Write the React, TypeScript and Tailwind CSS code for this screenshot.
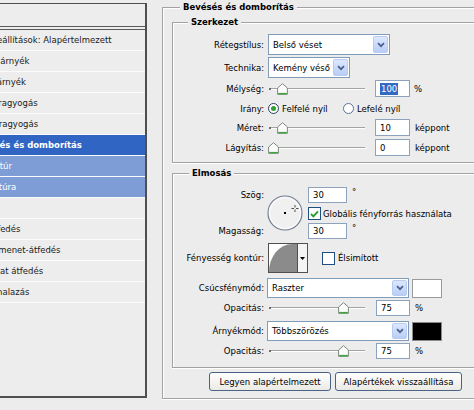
import React from "react";

type Row = { t: string; ml: string; kind?: "sel" | "sub" };

const rows: Row[] = [
  { t: "Keverési beállítások: Alapértelmezett", ml: "-ml-[47px]" },
  { t: "Vetett árnyék", ml: "-ml-[28px]" },
  { t: "Belső árnyék", ml: "-ml-[29px]" },
  { t: "Külső ragyogás", ml: "-ml-[27px]" },
  { t: "Belső ragyogás", ml: "-ml-[27px]" },
  { t: "Bevésés és domborítás", ml: "-ml-[29px]", kind: "sel" },
  { t: "Kontúr", ml: "-ml-[16px]", kind: "sub" },
  { t: "Textúra", ml: "-ml-[15px]", kind: "sub" },
  { t: "Szatén", ml: "-ml-[31px]" },
  { t: "Színátfedés", ml: "-ml-[29px]" },
  { t: "Színátmenet-átfedés", ml: "-ml-[28px]" },
  { t: "Mintázat átfedés", ml: "-ml-[28px]" },
  { t: "Körvonalazás", ml: "-ml-[27px]" },
];

function StyleList() {
  return (
    <div className="mt-[3px] w-[147px] h-[395px] shrink-0 overflow-hidden border-t border-r-2 border-b-2 border-[#4f4f4f] bg-[#ededed] flex flex-col">
      <div className="h-[26px] shrink-0 border-b-4 border-double border-[#5a5a5a]" />
      {rows.map((r) => {
        const tone =
          r.kind === "sel"
            ? "bg-[#3165c4] text-white font-bold"
            : r.kind === "sub"
            ? "bg-[#7e9dd6] text-white"
            : "text-[#1a1a1a]";
        return (
          <div
            key={r.t}
            className={`h-[21px] shrink-0 border-b border-[#fbfbfb] flex items-center overflow-hidden ${tone}`}
          >
            <span className={`shrink-0 whitespace-nowrap leading-[12px] ${r.ml}`}>{r.t}</span>
          </div>
        );
      })}
    </div>
  );
}

function Label({ children }: { children: React.ReactNode }) {
  return <div className="w-[91px] shrink-0 text-right whitespace-nowrap leading-[12px]">{children}</div>;
}

function Chevron() {
  return (
    <svg width="8" height="6" viewBox="0 0 8 6">
      <path d="M1 1.2 L4 4.2 L7 1.2" fill="none" stroke="#4a5f8c" strokeWidth="1.7" />
    </svg>
  );
}

function Select({ w, h, value }: { w: string; h: string; value: string }) {
  return (
    <div className={`${w} ${h} shrink-0 bg-white border border-[#7f9db9] flex items-center`}>
      <span className="flex-1 pl-[4px] whitespace-nowrap leading-[12px]">{value}</span>
      <div className="w-[17px] h-full p-px">
        <div className="h-full rounded-[2px] border border-[#b8cbf3] bg-gradient-to-b from-[#dde8fe] to-[#b9cdf7] flex items-center justify-center">
          <Chevron />
        </div>
      </div>
    </div>
  );
}

function Field({ w, h, children }: { w: string; h: string; children: React.ReactNode }) {
  return (
    <div className={`${w} ${h} shrink-0 bg-white border border-[#8da3bd] flex items-center pl-[4px] leading-[12px]`}>
      {children}
    </div>
  );
}

function Thumb() {
  return (
    <svg width="11" height="12" viewBox="0 0 11 12">
      <path d="M5.5 0.7 L10.4 5 L10.4 11.3 L0.6 11.3 L0.6 5 Z" fill="#fbfcfb" stroke="#7d8a7d" strokeWidth="1" />
      <path d="M1.2 10.6 H9.8" stroke="#3da43d" strokeWidth="1.4" />
    </svg>
  );
}

function Slider({ pos }: { pos: string }) {
  return (
    <div className="relative w-[100px] h-full shrink-0">
      <div className="absolute left-[2px] right-[3px] top-1/2 -mt-px h-0 border-t border-b border-t-[#a3a3a3] border-b-white" />
      <div className="absolute left-[1px] top-1/2 -mt-px w-[2px] h-[2px] bg-[#6e6e6e]" />
      <div className={`absolute top-1/2 -mt-[6px] ${pos}`}>
        <Thumb />
      </div>
    </div>
  );
}

function Radio({ on }: { on?: boolean }) {
  return (
    <span
      className={`w-[11px] h-[11px] shrink-0 rounded-full border bg-white flex items-center justify-center ${
        on ? "border-[#2a3f5a]" : "border-[#5b7394]"
      }`}
    >
      {on && <span className="w-[5px] h-[5px] rounded-full bg-[#2ea12e]" />}
    </span>
  );
}

function Check({ on }: { on?: boolean }) {
  return (
    <span className="w-[13px] h-[13px] shrink-0 border border-[#1f4f80] bg-white flex items-center justify-center">
      {on && (
        <svg width="9" height="8" viewBox="0 0 9 8">
          <path d="M1 4 L3.4 6.4 L8 1.3" fill="none" stroke="#25a125" strokeWidth="1.9" />
        </svg>
      )}
    </span>
  );
}

function AngleDial() {
  return (
    <svg width="36" height="36" viewBox="0 0 36 36">
      <circle cx="18" cy="18" r="17" fill="#f0f0f0" stroke="#6f7c90" strokeWidth="1.1" />
      <circle cx="18" cy="18" r="15.6" fill="none" stroke="#ffffff" strokeWidth="1" />
      <rect x="17" y="17" width="2" height="2" fill="#000" />
      <path d="M24.5 13.5 H31.5 M28 10 V17" stroke="#4d4d4d" strokeWidth="1" />
      <rect x="27" y="12.5" width="2" height="2" fill="#f0f0f0" />
    </svg>
  );
}

function ContourPicker() {
  return (
    <div className="ml-[4px] w-[40px] h-[30px] shrink-0 border border-[#505050] bg-white flex">
      <svg width="28" height="28" viewBox="0 0 28 28" className="shrink-0">
        <path d="M0 28 A 23 28 0 0 1 23 0 L28 0 L28 28 Z" fill="#8b8b8b" />
      </svg>
      <div className="flex-1 border-l border-[#505050] bg-[#f4f4f4] flex items-center justify-center">
        <svg width="5" height="3" viewBox="0 0 5 3">
          <path d="M0 0 H5 L2.5 3 Z" fill="#000" />
        </svg>
      </div>
    </div>
  );
}

function Group({
  title,
  titleMl,
  className,
  children,
}: {
  title: string;
  titleMl: string;
  className: string;
  children: React.ReactNode;
}) {
  return (
    <div
      className={`shrink-0 border-t border-l border-b border-[#a2a2a2] shadow-[inset_1px_1px_0_#fff,0_1px_0_#fff] flex flex-col ${className}`}
    >
      <div className={`-mt-[7px] ${titleMl} self-start h-[12px] px-[3px] bg-[#ececec] font-bold leading-[12px] whitespace-nowrap`}>
        {title}
      </div>
      {children}
    </div>
  );
}

function Structure() {
  return (
    <Group title="Szerkezet" titleMl="ml-[15px]" className="ml-[9px] mt-[9px] h-[141px]">
      <div className="mt-[6px] flex items-center h-[21px]">
        <Label>Rétegstílus:</Label>
        <div className="ml-[4px]">
          <Select w="w-[122px]" h="h-[21px]" value="Belső véset" />
        </div>
      </div>
      <div className="mt-[2px] flex items-center h-[21px]">
        <Label>Technika:</Label>
        <div className="ml-[4px]">
          <Select w="w-[82px]" h="h-[21px]" value="Kemény véső" />
        </div>
      </div>
      <div className="mt-[2px] flex items-center h-[17px]">
        <Label>Mélység:</Label>
        <div className="ml-[4px] h-full flex items-center">
          <Slider pos="left-[9px]" />
        </div>
        <div className="ml-[7px]">
          <Field w="w-[35px]" h="h-[17px]">
            <span className="bg-[#316ac5] text-white px-px leading-[12px]">100</span>
          </Field>
        </div>
        <span className="ml-[4px] leading-[12px]">%</span>
      </div>
      <div className="mt-[3px] flex items-center h-[17px]">
        <Label>Irány:</Label>
        <div className="ml-[4px] w-[75px] flex items-center">
          <Radio on />
          <span className="ml-[3px] whitespace-nowrap leading-[12px]">Felfelé nyíl</span>
        </div>
        <Radio />
        <span className="ml-[3px] whitespace-nowrap leading-[12px]">Lefelé nyíl</span>
      </div>
      <div className="mt-[2px] flex items-center h-[17px]">
        <Label>Méret:</Label>
        <div className="ml-[4px] h-full flex items-center">
          <Slider pos="left-[9px]" />
        </div>
        <div className="ml-[7px]">
          <Field w="w-[35px]" h="h-[17px]">10</Field>
        </div>
        <span className="ml-[5px] leading-[12px]">képpont</span>
      </div>
      <div className="mt-[3px] flex items-center h-[17px]">
        <Label>Lágyítás:</Label>
        <div className="ml-[4px] h-full flex items-center">
          <Slider pos="left-[0px]" />
        </div>
        <div className="ml-[7px]">
          <Field w="w-[35px]" h="h-[17px]">0</Field>
        </div>
        <span className="ml-[5px] leading-[12px]">képpont</span>
      </div>
    </Group>
  );
}

function Shading() {
  return (
    <Group title="Elmosás" titleMl="ml-[16px]" className="ml-[9px] mt-[10px] h-[195px]">
      {/* angle, global light, altitude */}
      <div className="mt-[8px] flex h-[52px]">
        <div className="w-[91px] shrink-0 flex flex-col justify-between text-right">
          <div className="h-[16px] leading-[16px]">Szög:</div>
          <div className="h-[16px] leading-[16px]">Magasság:</div>
        </div>
        <div className="ml-[3px] mt-[8px] w-[36px] h-[36px] shrink-0">
          <AngleDial />
        </div>
        <div className="ml-[5px] flex flex-col">
          <div className="flex h-[16px]">
            <Field w="w-[39px]" h="h-[16px]">30</Field>
            <span className="ml-[5px] leading-[10px]">°</span>
          </div>
          <div className="mt-[4px] flex items-center h-[13px]">
            <Check on />
            <span className="ml-[2px] whitespace-nowrap leading-[12px]">Globális fényforrás használata</span>
          </div>
          <div className="mt-[3px] flex h-[16px]">
            <Field w="w-[39px]" h="h-[16px]">30</Field>
            <span className="ml-[5px] leading-[10px]">°</span>
          </div>
        </div>
      </div>

      <div className="mt-[4px] flex items-center h-[30px]">
        <Label>Fényesség kontúr:</Label>
        <ContourPicker />
        <div className="ml-[14px]">
          <Check />
        </div>
        <span className="ml-[3px] whitespace-nowrap leading-[12px]">Élsimított</span>
      </div>

      <div className="mt-[5px] flex items-center h-[20px]">
        <Label>Csúcsfénymód:</Label>
        <div className="ml-[3px]">
          <Select w="w-[142px]" h="h-[20px]" value="Raszter" />
        </div>
        <div className="ml-[3px] w-[30px] h-[19px] bg-white border border-[#9a9a9a]" />
      </div>
      <div className="mt-[2px] flex items-center h-[16px]">
        <Label>Opacitás:</Label>
        <div className="ml-[4px] h-full flex items-center">
          <Slider pos="left-[70px]" />
        </div>
        <div className="ml-[8px]">
          <Field w="w-[34px]" h="h-[16px]">75</Field>
        </div>
        <span className="ml-[5px] leading-[12px]">%</span>
      </div>

      <div className="mt-[5px] flex items-center h-[20px]">
        <Label>Árnyékmód:</Label>
        <div className="ml-[3px]">
          <Select w="w-[142px]" h="h-[20px]" value="Többszörözés" />
        </div>
        <div className="ml-[3px] w-[30px] h-[19px] bg-black border border-[#8a8a8a]" />
      </div>
      <div className="mt-[2px] flex items-center h-[16px]">
        <Label>Opacitás:</Label>
        <div className="ml-[4px] h-full flex items-center">
          <Slider pos="left-[70px]" />
        </div>
        <div className="ml-[8px]">
          <Field w="w-[34px]" h="h-[16px]">75</Field>
        </div>
        <span className="ml-[5px] leading-[12px]">%</span>
      </div>
    </Group>
  );
}

function Button({ w, children }: { w: string; children: React.ReactNode }) {
  return (
    <div
      className={`${w} h-[19px] shrink-0 rounded-[3px] border border-[#4b6486] bg-gradient-to-b from-[#ffffff] to-[#ebeae4] flex items-center justify-center whitespace-nowrap leading-[12px]`}
    >
      {children}
    </div>
  );
}

export default function App() {
  return (
    <div className="w-[474px] h-[410px] overflow-hidden bg-[#ececec] flex items-start font-['DejaVu_Sans',sans-serif] text-[8.5px] text-black">
      <StyleList />
      <Group
        title="Bevésés és domborítás"
        titleMl="ml-[17px]"
        className="ml-[15px] mt-[7px] w-[340px] h-[392px]"
      >
        <Structure />
        <Shading />
        <div className="mt-[4px] ml-[46px] flex gap-[4px]">
          <Button w="w-[122px]">Legyen alapértelmezett</Button>
          <Button w="w-[127px]">Alapértékek visszaállítása</Button>
        </div>
      </Group>
    </div>
  );
}
